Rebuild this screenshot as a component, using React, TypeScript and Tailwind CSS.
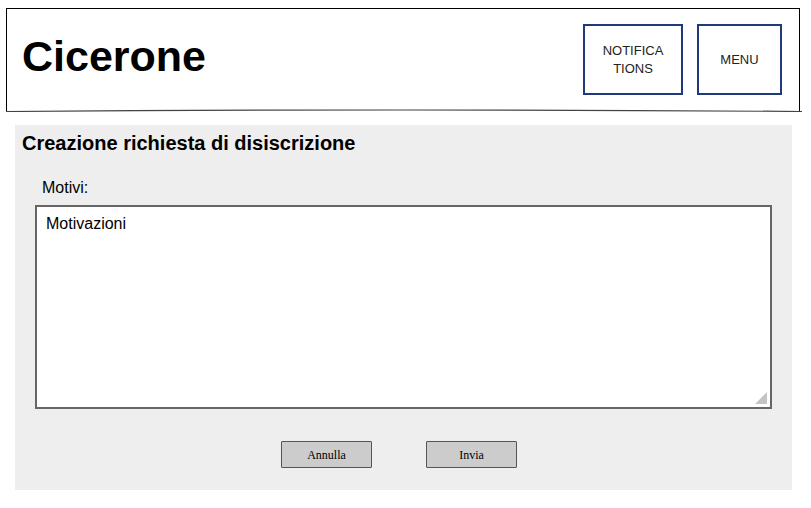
import React from "react";

export default function App() {
  return (
    <div className="w-[811px] h-[508px] bg-white" style={{ fontFamily: '"Liberation Sans", Arial, sans-serif' }}>
      <div className="pt-[8px] pl-[6px]">
        <div className="w-[794px] border-x border-t border-black">
          <div className="h-[100px] flex items-center justify-between pl-[15px] pr-[17px]">
            <div className="text-[43px] font-bold text-black leading-none -mt-[6px]">Cicerone</div>
            <div className="flex gap-[14px] items-center mt-[1px]">
              <div className="w-[100px] h-[71px] border-2 border-[#1f3a7a] flex items-center justify-center text-center text-[13px] leading-[18px] text-[#222] pt-[1px]">
                NOTIFICA<br />TIONS
              </div>
              <div className="w-[85px] h-[71px] border-2 border-[#1f3a7a] flex items-center justify-center text-[13px] text-[#222] pt-[1px]">
                MENU
              </div>
            </div>
          </div>
          <svg width="796" height="3" className="block -ml-px" viewBox="0 0 796 3">
            <path d="M0 2.5 Q 398 -0.5 796 2.5" stroke="#444" strokeWidth="1.2" fill="none" />
          </svg>
        </div>
      </div>
      <div className="mt-[13px] ml-[15px] w-[777px] h-[365px] bg-[#eeeeee] pt-[6px]">
        <div className="pl-[7px] text-[20px] font-bold text-black leading-[24px]">Creazione richiesta di disiscrizione</div>
        <div className="pl-[27px] mt-[24px] text-[16px] leading-[18px] text-black">Motivi:</div>
        <div className="mt-[8px] ml-[20px] w-[737px] h-[204px] border-2 border-[#666666] bg-white relative pl-[9px] pt-[8px] text-[16px] leading-[18px] text-black">
          Motivazioni
          <svg className="absolute right-[3px] bottom-[3px]" width="12" height="12" viewBox="0 0 12 12">
            <polygon points="12,0 12,12 0,12" fill="#c4c4c4" />
          </svg>
        </div>
        <div className="mt-[32px] ml-[266px] flex gap-[54px]">
          <div className="w-[91px] h-[27px] bg-[#cccccc] border border-[#555] rounded-[1px] flex items-center justify-center text-[12px] text-black" style={{ fontFamily: '"Liberation Serif", "Times New Roman", serif' }}>
            Annulla
          </div>
          <div className="w-[91px] h-[27px] bg-[#cccccc] border border-[#555] rounded-[1px] flex items-center justify-center text-[12px] text-black" style={{ fontFamily: '"Liberation Serif", "Times New Roman", serif' }}>
            Invia
          </div>
        </div>
      </div>
    </div>
  );
}
